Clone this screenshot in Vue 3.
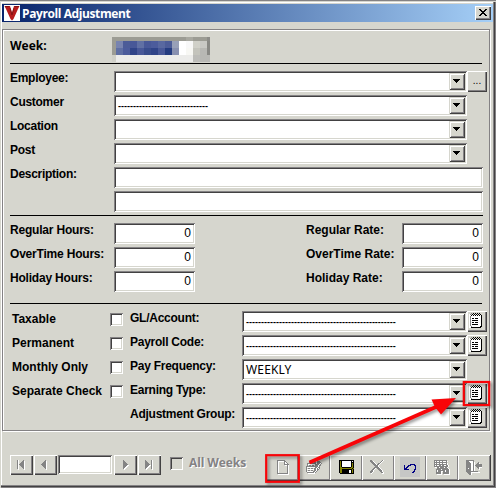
<script setup>
const shade = { k: '#000000', g: '#848484', w: '#ffffff', o: '#848400', b: '#000084', d: '#424242' }

const bitmaps = {
  notes: [
    '..g.k.k.k.k..',
    'wg.k.k.k.k.k.',
    'wwkwkwkwkwkwk',
    'wgwwwwwwwwwwk',
    'wgwwwwwwwwwwk',
    'wgwkkwkkkwwwk',
    'wgwwwwwwwwwwk',
    'wgwkkkkkkwwwk',
    'wgwwwwwwwwwwk',
    'wgwkkwkkkwwwk',
    'wgwwwwwwwwwwk',
    'wgwkkkkkkwwwk',
    'wgwwwwwwwwwwk',
    'wwgwwwwwwwwkk',
    'wwkkkkkkkkkk.'
  ],
  page: [
    'gggggggg....',
    'gwwwwwwgg...',
    'gw.....gwg..',
    'gw.....gwwg.',
    'gw.....ggggg',
    'gw......wwgw',
    'gw........gw',
    'gw........gw',
    'gw........gw',
    'gw........gw',
    'gw........gw',
    'gw........gw',
    'gw........gw',
    'gggggggggggw',
    '.wwwwwwwwwww'
  ],
  edit: [
    '....gggggggg....',
    '...gwwwwwwwggg..',
    '...g.gg.gg.gggg.',
    '.gggggggggwgggwg',
    '.gwwwwwwwggggwg.',
    '.g.gg.gg.gggwgg.',
    'ggggggggggggwg..',
    'gwwwwwwwwggwgg..',
    'g.gg.gg.ggwgwg..',
    'gwwwwwwwggwgg...',
    'g.gg.gg.ggwg....',
    'gwwwwwwggwg.....',
    '.gggggggwg......',
    '..wwwwwww.......'
  ],
  save: [
    'kkkkkkkkkkkkkkk',
    'kokwwwwwwwwwkwk',
    'kokwwwwwwwwwkkk',
    'kokwwwwwwwwwkok',
    'kokwwwwwwwwwkok',
    'kokwwwwwwwwwkok',
    'kokwwwwwwwwwkok',
    'kookkkkkkkkkook',
    'kooooooooooooko',
    'kookkkkkkkkkkok',
    'kookkkkkkkwwkok',
    'kookkkkkkkwwkok',
    'kookkkkkkkwwkok',
    '.kkkkkkkkkkkkkk'
  ],
  remove: [
    'gg..........gw.',
    'gggw.......gw..',
    '.gggw.....gw...',
    '..gggw..ggw....',
    '...gggwggw.....',
    '....ggggw......',
    '.....gggw......',
    '....gggggw.....',
    '...ggw.gggw....',
    '..ggw...gggw...',
    '.ggw.....gggw..',
    'gggw......ggw..',
    'ggw........ggw.',
    '.w..........ww.'
  ],
  undo: [
    '......bbbbb.',
    'b...bbb...bb',
    'b..bb......b',
    'b.bb.......b',
    'bbb........b',
    'bbbbb.....bb',
    '..........b.',
    '.........bb.',
    '........bb..'
  ],
  find: [
    'ggggggggggggg...',
    'gwgwwgwwgwwwgw..',
    'ggggggggggggg...',
    'gwgwwgwwgwwwgw..',
    'gggggggggggggw..',
    'gwgwwggwggwwggw.',
    'ggggggggggggggw.',
    '.wwggwggggwggw..',
    '...gggggggggggw.',
    '..gggggwgggggggw',
    '..gwgggggggwgggw',
    '..gwgggwwggwgggw',
    '..gggggw.ggggggw',
    '..gggggw.ggggggw',
    '...wwwww..wwwwww'
  ],
  exit: [
    'gggggggg........',
    'gggwwwwg........',
    'ggggwwwgw...g...',
    'gggggwwgw..ggw..',
    'gggggwwgw.gggggg',
    'gggggwwgwggggggg',
    'gggggwwgw.gggggg',
    'gggggwwgw..ggwww',
    'ggwggwwgw...gw..',
    'gggggwwgw....w..',
    'gggggwwgw.......',
    'gggggggggggg....',
    '.ggggwwwwwwwww..',
    '..gggw..........',
    '...ggw..........'
  ],
  drop: ['kkkkkkk', '.kkkkk.', '..kkk..', '...k...'],
  close: ['kk....kk', '.kk..kk.', '..kkkk..', '...kk...', '..kkkk..', '.kk..kk.', 'kk....kk'],
  first: ['gw....g.', 'gw...ggw', 'gw..gggw', 'gw.ggggw', 'gwgggggw', 'gw.ggggw', 'gw..gggw', 'gw...ggw', 'gw....gw', '.w.....w'],
  prev: ['....g.', '...ggw', '..gggw', '.ggggw', 'gggggw', '.ggggw', '..gggw', '...ggw', '....gw', '.....w'],
  next: ['g.....', 'gg....', 'ggg...', 'gggg..', 'ggggg.', 'ggggww', 'gggww.', 'ggww..', 'gww...', '.w....'],
  last: ['g.....gw', 'gg....gw', 'ggg...gw', 'gggg..gw', 'ggggg.gw', 'ggggwwgw', 'gggww.gw', 'ggww..gw', 'gww...gw', '.w.....w']
}

const icons = {}
for (const [name, rows] of Object.entries(bitmaps)) {
  const runs = {}
  rows.forEach((row, y) => {
    for (let x = 0; x < row.length; x++) {
      if (row[x] !== '.') runs[row[x]] = (runs[row[x]] || '') + `M${x} ${y}h1v1h-1z`
    }
  })
  icons[name] = { w: rows[0].length, h: rows.length, paths: Object.entries(runs).map(([c, d]) => ({ fill: shade[c], d })) }
}

const PixelIcon = (props) => {
  const i = icons[props.name]
  return h('svg', { width: i.w, height: i.h, viewBox: `0 0 ${i.w} ${i.h}`, 'shape-rendering': 'crispEdges' },
    i.paths.map((p) => h('path', { fill: p.fill, d: p.d })))
}
PixelIcon.props = ['name']

const mosaic = [
  ['#9c9c94', 4, ['#9c9c94', '#9c9c94', '#9c9c94', '#9c9c94', '#9c9c94', '#9c9c94', '#9c9c94', '#9c9c94', '#9c9c94', '#9c9c94', '#a8a8a0', '#9c9c94', '#9c9c94', '#8c8c88']],
  ['#9c9c94', 7, ['#7884b0', '#4c5c98', '#485898', '#6070a4', '#485898', '#4c5c9c', '#5868a0', '#4c5c98', '#98a0b8', '#ffffff', '#f8f8f8', '#d0d0c8', '#c8c8c4', '#888884']],
  ['#9c9c94', 7, ['#6070a4', '#4c5c9c', '#304488', '#485898', '#384c8c', '#304488', '#485898', '#243c80', '#8890b0', '#ffffff', '#f8f8f4', '#c4c4bc', '#b8b8b4', '#888884']],
  ['#d0d0c8', 7, ['#ececea', '#ececea', '#ececea', '#ececea', '#ececea', '#ececea', '#ececea', '#ececea', '#ececea', '#ececea', '#ececea', '#bcbcb8', '#b8b8b4', '#b8b8b4']]
]

const dashes = (n) => '-'.repeat(n)
const lookups = [
  { label: 'Employee:', value: '', more: true },
  { label: 'Customer', value: dashes(30) },
  { label: 'Location', value: '' },
  { label: 'Post', value: '' }
]
const amounts = [
  ['Regular Hours:', 'Regular Rate:'],
  ['OverTime Hours:', 'OverTime Rate:'],
  ['Holiday Hours:', 'Holiday Rate:']
]
const options = [
  { flag: 'Taxable', label: 'GL/Account:', notes: true },
  { flag: 'Permanent', label: 'Payroll Code:', notes: true },
  { flag: 'Monthly Only', label: 'Pay Frequency:', value: 'WEEKLY' },
  { flag: 'Separate Check', label: 'Earning Type:', notes: true },
  { flag: '', label: 'Adjustment Group:', notes: true }
]
const tools = ['page', 'edit', 'save', 'remove', 'undo', 'find', 'exit']
</script>

<script>
import { h } from 'vue'
</script>

<template>
  <div class="window">
    <header class="titlebar">
      <svg class="logo" width="16" height="16" viewBox="0 0 16 16">
        <rect width="16" height="16" fill="#fff" />
        <path d="M0.5 1H6L8 7.5 10 1H15.5L14 4 9.5 14 8 15.5 6.5 14 2 4z" fill="#b81c1c" />
        <path d="M1 1.5H5M10.5 1.5H15M6 3L8 10 10 3" fill="none" stroke="#701010" stroke-width=".7" />
      </svg>
      <h1>Payroll Adjustment</h1>
      <button class="close"><PixelIcon name="close" /></button>
    </header>

    <main class="panel">
      <section class="week">
        <span class="week-label">Week:</span>
        <div class="mosaic">
          <div v-for="(row, r) in mosaic" :key="r" class="mosaic-row" :style="{ height: row[1] + 'px' }">
            <i class="edge" :style="{ background: row[0] }"></i>
            <i v-for="(c, n) in row[2]" :key="n" :style="{ background: c }"></i>
          </div>
        </div>
      </section>

      <section class="lookups">
        <div v-for="l in lookups" :key="l.label" class="row">
          <label class="name">{{ l.label }}</label>
          <div class="field combo">
            <span class="dashes">{{ l.value }}</span>
            <button class="drop"><PixelIcon name="drop" /></button>
          </div>
          <button v-if="l.more" class="raised more">...</button>
        </div>
        <div class="row">
          <label class="name">Description:</label>
          <div class="field wide"></div>
        </div>
        <div class="row">
          <label class="name"></label>
          <div class="field wide"></div>
        </div>
      </section>

      <section class="amounts">
        <div v-for="a in amounts" :key="a[0]" class="row">
          <label class="name">{{ a[0] }}</label>
          <div class="field number">0</div>
          <label class="rate">{{ a[1] }}</label>
          <div class="field number">0</div>
        </div>
      </section>

      <section class="options">
        <div v-for="o in options" :key="o.label" class="row">
          <label class="flag">{{ o.flag }}</label>
          <span class="tick"><i v-if="o.flag" class="field check"></i></span>
          <label class="kind">{{ o.label }}</label>
          <div class="field combo">
            <span v-if="o.value" class="value">{{ o.value }}</span>
            <span v-else class="dashes">{{ dashes(50) }}</span>
            <button class="drop"><PixelIcon name="drop" /></button>
          </div>
          <button v-if="o.notes" class="raised notes"><PixelIcon name="notes" /></button>
        </div>
      </section>
    </main>

    <footer class="footer">
      <nav class="pager">
        <button class="raised"><PixelIcon name="first" /></button>
        <button class="raised"><PixelIcon name="prev" /></button>
        <div class="field record"></div>
        <button class="raised forward"><PixelIcon name="next" /></button>
        <button class="raised"><PixelIcon name="last" /></button>
      </nav>
      <i class="field check off"></i>
      <span class="all">All Weeks</span>
      <div class="tools">
        <button v-for="t in tools" :key="t" :class="['tool', t]"><PixelIcon :name="t" /></button>
      </div>
    </footer>

    <svg class="callout" width="496" height="488" viewBox="0 0 496 488">
      <g class="marks">
        <rect x="266.2" y="455.2" width="32.6" height="26.6" />
        <rect x="463.8" y="382" width="25.4" height="23" />
        <path class="shaft" d="M309.500 462.500L437 406.500" />
        <path class="head" d="M456 398L431.500 399.500 435 407 441 414.500z" />
      </g>
    </svg>
  </div>
</template>

<style>
body {
  margin: 0;
}
</style>

<style scoped>
.window {
  position: relative;
  box-sizing: border-box;
  width: 496px;
  height: 488px;
  padding: 4px 3px 0 2px;
  overflow: hidden;
  background: #d6d6ce;
  box-shadow: inset 0 1px #848284, inset 1px 2px #d6d6ce, inset -1px -1px #848284, inset -2px -2px #424142, inset -3px -3px #848284, inset 2px 3px #fff;
  font: bold 12px/14px 'Liberation Sans', sans-serif;
  color: #000;
}
.titlebar {
  display: flex;
  align-items: center;
  height: 18px;
  padding: 0 2px;
  background: linear-gradient(90deg, #08246b, #a5cff7);
}
h1 {
  flex: 1;
  margin: 0 0 0 2px;
  font: bold 12px/17px 'Open Sans', sans-serif;
  letter-spacing: -0.4px;
  color: #fff;
}
button {
  display: flex;
  align-items: flex-start;
  justify-content: flex-start;
  box-sizing: border-box;
  padding: 0;
  border: 0;
  border-radius: 0;
  background: #d6d6ce;
}
svg {
  flex: none;
}
.close {
  width: 16px;
  height: 14px;
  padding: 3px 0 0 4px;
  box-shadow: inset 1px 1px #fff, inset -1px -1px #424142, inset -2px -2px #848284;
}
.panel {
  box-sizing: border-box;
  width: 488px;
  height: 402px;
  margin-top: 7px;
  padding: 0 6px 0 7px;
  border: 1px solid #848284;
  box-shadow: 1px 1px #fff, inset 1px 1px #fff;
}
.week {
  display: flex;
  box-sizing: border-box;
  width: 472px;
  height: 34px;
  padding-top: 7px;
  border-bottom: 1px solid #000;
}
.week-label {
  width: 102px;
  font: bold 12px/17px 'Open Sans', sans-serif;
}
.mosaic {
  width: 98px;
  height: 25px;
  overflow: hidden;
}
.mosaic-row {
  display: flex;
}
.mosaic-row i {
  flex: none;
  width: 7px;
}
.mosaic-row .edge {
  width: 4px;
}
.lookups {
  display: grid;
  gap: 3px;
  box-sizing: border-box;
  width: 473px;
  height: 152px;
  padding-top: 7px;
  align-content: start;
  border-bottom: 1px solid #000;
}
.amounts {
  display: grid;
  gap: 3px;
  box-sizing: border-box;
  width: 472px;
  height: 88px;
  padding-top: 7px;
  align-content: start;
  border-bottom: 1px solid #000;
}
.options {
  display: grid;
  gap: 3px;
  padding: 7px 0 0 2px;
}
.row {
  display: flex;
  height: 21px;
  white-space: nowrap;
}
.name {
  width: 104px;
  flex: none;
  letter-spacing: -0.2px;
}
.lookups .name {
  letter-spacing: -0.28px;
}
.field {
  box-sizing: border-box;
  background: #fff;
  box-shadow: inset 1px 1px #848284, inset -1px -1px #fff, inset 2px 2px #424142, inset -2px -2px #d6d6ce;
}
.combo {
  display: flex;
  width: 353px;
  padding: 2px;
}
.combo span {
  flex: 1;
}
.dashes {
  padding-left: 2px;
  font: bold 9px/18px 'Liberation Sans', sans-serif;
}
.value {
  padding-left: 2px;
  font: 12px/17px 'Noto Sans', sans-serif;
  letter-spacing: 0.15px;
}
.drop {
  width: 16px;
  height: 17px;
  padding: 6px 0 0 4px;
  box-shadow: inset 1px 1px #d6d6ce, inset -1px -1px #424142, inset 2px 2px #fff, inset -2px -2px #848284;
}
.raised {
  box-shadow: inset 1px 1px #fff, inset -1px -1px #424142, inset -2px -2px #848284;
}
.more {
  justify-content: center;
  width: 20px;
  height: 21px;
  font: 10px/20px 'Liberation Sans', sans-serif;
  color: #000;
}
.wide {
  width: 369px;
}
.number {
  width: 81px;
  padding-right: 4px;
  font: 12px/20px 'Liberation Sans', sans-serif;
  text-align: right;
}
.rate {
  width: 96px;
  margin-left: 111px;
}
.flag {
  width: 98px;
  padding-top: 1px;
}
.tick {
  width: 20px;
  padding-top: 2px;
}
.check {
  display: block;
  width: 13px;
  height: 13px;
}
.kind {
  width: 112px;
  letter-spacing: -0.25px;
}
.options .combo {
  width: 225px;
}
.notes {
  width: 20px;
  height: 21px;
  padding: 2px 0 0 2px;
}
.footer {
  display: flex;
  align-items: flex-start;
  padding: 24px 0 0 8px;
}
.pager {
  display: flex;
  gap: 1px;
  width: 160px;
}
.pager .raised {
  width: 23px;
  height: 20px;
  padding: 5px 0 0 7px;
}
.pager .forward {
  padding-left: 9px;
}
.record {
  width: 54px;
  height: 19px;
  margin-right: 1px;
}
.off {
  margin-top: 2px;
  background: #d6d6ce;
}
.all {
  width: 77px;
  padding-left: 6px;
  font: bold 12px/16px 'Open Sans', sans-serif;
  letter-spacing: -0.1px;
  color: #848284;
  text-shadow: 1px 1px #fff;
}
.tools {
  display: flex;
  width: 225px;
  height: 26px;
  box-shadow: inset -1px -1px #424142;
}
.tool {
  width: 32px;
  height: 25px;
  padding: 5px 0 0 8px;
  box-shadow: inset 1px 1px #fff, inset -1px -1px #848284;
}
.tool.page {
  padding-left: 11px;
}
.tool.save {
  padding-left: 9px;
}
.tool.undo {
  padding: 2px 0 0 6px;
}
.undo svg {
  padding: 7px 4px 4px;
  background: #c6c7c6;
}
.callout {
  position: absolute;
  left: 0;
  top: 0;
}
.marks {
  filter: drop-shadow(2px 2px 1.5px rgba(0, 0, 0, 0.4));
}
.marks rect {
  fill: none;
  stroke: #f80408;
  stroke-width: 2.2;
}
.shaft {
  stroke: #f80408;
  stroke-width: 3.6;
}
.head {
  fill: #f80408;
}
</style>
